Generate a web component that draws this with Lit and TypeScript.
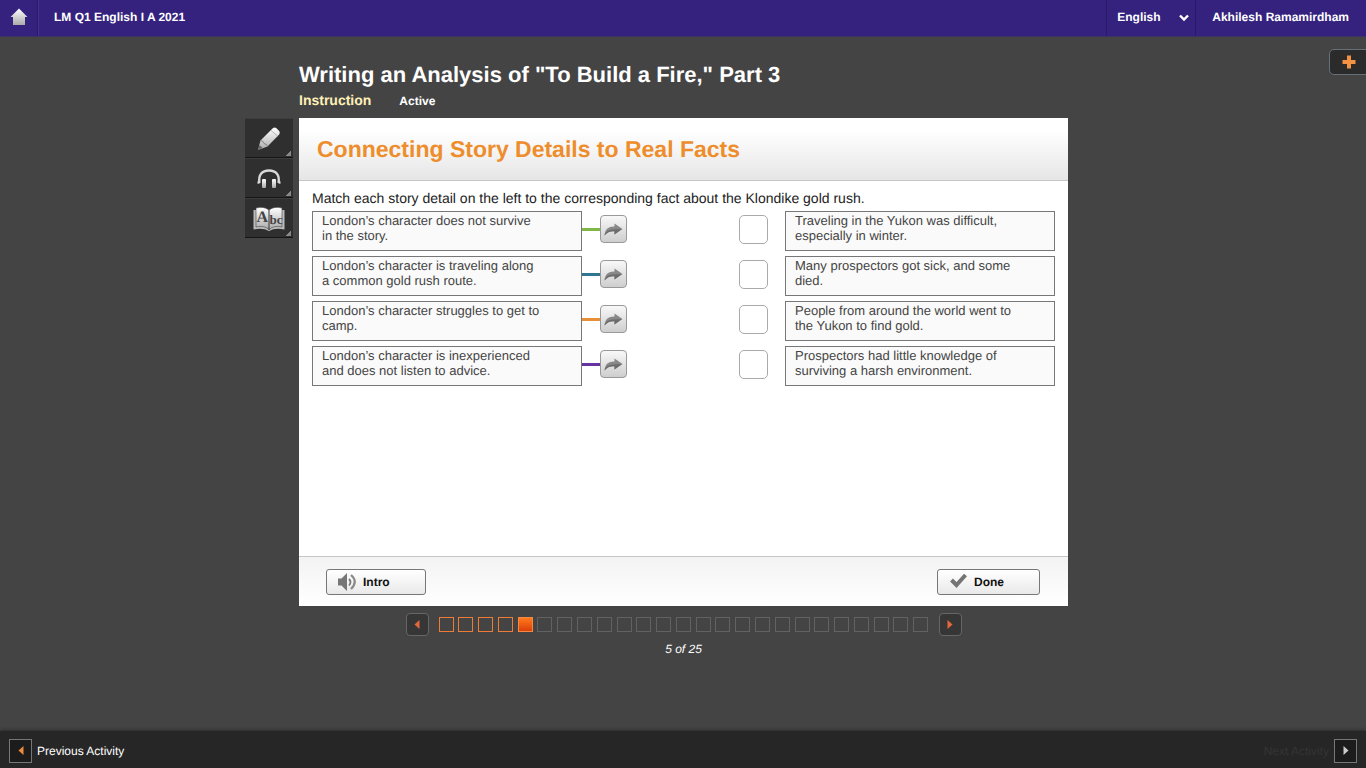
import { LitElement, html, css, svg } from "lit";
import { customElement } from "lit/decorators.js";
import { classMap } from "lit/directives/class-map.js";

interface Pair {
  detail: string;
  fact: string;
  tone: string;
}

const PAIRS: Pair[] = [
  {
    detail: "London’s character does not survive in the story.",
    fact: "Traveling in the Yukon was difficult, especially in winter.",
    tone: "green",
  },
  {
    detail: "London’s character is traveling along a common gold rush route.",
    fact: "Many prospectors got sick, and some died.",
    tone: "teal",
  },
  {
    detail: "London’s character struggles to get to camp.",
    fact: "People from around the world went to the Yukon to find gold.",
    tone: "orange",
  },
  {
    detail: "London’s character is inexperienced and does not listen to advice.",
    fact: "Prospectors had little knowledge of surviving a harsh environment.",
    tone: "purple",
  },
];

const metal = (id: string) => svg`
  <linearGradient id=${id} x1="0" y1="0" x2="0" y2="1">
    <stop offset="0" stop-color="#fff" />
    <stop offset="1" stop-color="#aaa" />
  </linearGradient>`;

const homeIcon = html`<svg width="18" height="18" viewBox="0 0 18 18" aria-hidden="true">
  <defs>${metal("home")}</defs>
  <path d="M9 0.5 17.5 9H15v8H3V9H0.5Z" fill="url(#home)" />
</svg>`;

const pencilIcon = html`<svg width="26" height="26" viewBox="0 0 26 26" aria-hidden="true">
  <defs>${metal("pen")}</defs>
  <path d="M16.500 2.500Q18.500 1 20.200 2L23.200 5Q24.500 6.500 23.200 8.500L11.500 20.500 2 24 4.500 14.500Z" fill="url(#pen)" />
  <path d="M15 4.500 21.500 10" stroke="#aaa" stroke-width="0.8" fill="none" />
  <path d="M3.400 19.200 6.600 21.600 1.800 24.200Z" fill="#666" />
  <path d="M4.500 14.500 6.500 15 8 17.500 10.500 18.500 11.500 20.500" fill="none" stroke="#777" stroke-width="0.8" />
</svg>`;

const headphonesIcon = html`<svg width="26" height="22" viewBox="0 0 26 22" aria-hidden="true">
  <defs>${metal("phones")}</defs>
  <path d="M1.500 14.500H3.500M3.500 15C2 7 6 2.500 13 2.500S24 7 22.500 15M22.500 14.500H24.500" fill="none" stroke="#d8d8d8" stroke-width="2.400" />
  <rect x="6" y="11" width="4" height="9" rx="1" fill="url(#phones)" />
  <rect x="16" y="11" width="4" height="9" rx="1" fill="url(#phones)" />
</svg>`;

const glossaryIcon = html`<svg class="book" width="32" height="26" viewBox="0 0 32 26" aria-hidden="true">
  <defs>${metal("book")}</defs>
  <path d="M0.500 4V23.500Q10 21.500 16 25 22 21.500 31.500 23.500V4Z" fill="#bbb" />
  <path d="M3 2Q11 0 16 4 21 0 29 2V21Q21 19 16 23.500 11 19 3 21Z" fill="url(#book)" stroke="#444" stroke-width="0.600" />
  <path d="M16 4V24" stroke="#333" />
  <text x="3.500" y="15.500" font-size="16">A</text>
  <text x="16.500" y="18" font-size="13">bc</text>
</svg>`;

const shareIcon = html`<svg width="19" height="13" viewBox="0 0 19 13" aria-hidden="true">
  <path d="M0.500 12.500C1 6 5 3.400 10.500 3.600V0.500L18.500 6 10.500 11.500V8.200C6 8 3 9.300 0.500 12.500Z" fill="#888" />
  <path d="M10.500 8.200C6 8 3 9.300 0.500 12.500 1.200 10 3.400 6.600 9 6.500L18 6 10.500 11.500Z" fill="#6c6c6c" />
</svg>`;

const speakerIcon = html`<svg width="20" height="20" viewBox="0 0 20 20" aria-hidden="true">
  <path d="M1 6.500H4.500L10 1V19L4.500 13.500H1Z" fill="#777" />
  <path d="M12 7Q15 10 12 13.500" fill="none" stroke="#777" stroke-width="1.800" />
  <path d="M14 3Q21.500 9.500 14 17" fill="none" stroke="#888" stroke-width="2.200" />
</svg>`;

const checkIcon = html`<svg width="18" height="18" viewBox="0 0 18 18" aria-hidden="true">
  <path d="M1.500 7 6.500 12 15.500 2" fill="none" stroke="#747474" stroke-width="4" />
</svg>`;

const plusIcon = html`<svg width="14" height="14" viewBox="0 0 14 14" aria-hidden="true">
  <path d="M5 0.500H9V5H13.500V9H9V13.500H5V9H0.500V5H5Z" fill="#f29242" />
</svg>`;

const chevronIcon = html`<svg class="chevron" width="10" height="8" viewBox="0 0 10 8" aria-hidden="true">
  <path d="M1 1.500 5 5.500 9 1.500" fill="none" stroke="#fff" stroke-width="2.400" />
</svg>`;

const leftIcon = html`<svg width="6" height="9" viewBox="0 0 6 9" aria-hidden="true">
  <path d="M5.500 0V9L0.500 4.500Z" fill="currentColor" />
</svg>`;

const rightIcon = html`<svg width="6" height="9" viewBox="0 0 6 9" aria-hidden="true">
  <path d="M0.500 0V9L5.500 4.500Z" fill="currentColor" />
</svg>`;

@customElement("app-root")
export class AppRoot extends LitElement {
  static properties = {
    current: { state: true },
  };

  declare current: number;
  private readonly total = 25;

  constructor() {
    super();
    this.current = 5;
  }

  static styles = css`
    :host {
      display: flex;
      flex-direction: column;
      min-height: 100vh;
      background: #444;
      color: #fff;
      font-family: "Liberation Sans", Arial, sans-serif;
      font-size: 12px;
      text-rendering: geometricPrecision;
    }
    * {
      box-sizing: border-box;
    }
    svg {
      display: block;
      flex: none;
    }
    h1,
    h2,
    p,
    ol,
    ul {
      margin: 0;
      padding: 0;
      list-style: none;
    }
    button,
    select {
      font: inherit;
      color: inherit;
      text-rendering: inherit;
      margin: 0;
      padding: 0;
      border: 0;
      background: none;
    }
    a {
      color: inherit;
      text-decoration: none;
    }

    .topbar {
      display: flex;
      height: 37px;
      background: #35227f;
      border-bottom: 1px solid #3b3462;
      font-weight: bold;
      line-height: 34px;
    }
    .home {
      display: flex;
      justify-content: center;
      padding-top: 8px;
      width: 38px;
      border-right: 1px solid #281a66;
    }
    .course {
      flex: 1;
      padding-left: 15px;
      border-left: 1px solid #443392;
    }
    .language {
      position: relative;
      width: 90px;
      border-left: 1px solid #281a66;
      border-right: 1px solid #281a66;
    }
    .language select {
      appearance: none;
      width: 100%;
      height: 34px;
      padding-left: 10px;
    }
    .chevron {
      position: absolute;
      right: 6px;
      top: 14px;
      pointer-events: none;
    }
    .user {
      padding: 0 17px 0 16px;
    }

    main {
      flex: 1;
      display: grid;
      grid-template-columns: 1fr minmax(0, 769px) 1fr;
      align-content: start;
      position: relative;
      padding-left: 1px;
    }
    .heading {
      grid-column: 2;
      height: 81px;
      padding-top: 24px;
    }
    h1 {
      font-size: 22px;
      line-height: 28px;
    }
    .status {
      display: flex;
      align-items: baseline;
      gap: 28px;
      font-weight: bold;
      line-height: 22px;
    }
    .kind {
      font-size: 14px;
      color: #fff0b8;
    }
    .add {
      position: absolute;
      right: -4px;
      top: 12px;
      display: grid;
      place-items: center;
      width: 41px;
      height: 26px;
      padding-right: 2px;
      background: #2b2b2b;
      border: 1px solid #667078;
      border-radius: 5px;
    }
    .clip {
      position: absolute;
      inset: 0;
      overflow: hidden;
      pointer-events: none;
    }
    .clip .add {
      pointer-events: auto;
    }

    .tools {
      grid-column: 1;
      justify-self: end;
      align-self: start;
      margin-right: 6px;
      width: 48px;
      background: #2f2f2f;
    }
    .tool {
      display: grid;
      place-items: center;
      width: 100%;
      height: 40px;
      border-top: 1px solid #3d3d3d;
      border-bottom: 1px solid #151515;
      background: linear-gradient(315deg, #888 4px, transparent 4px);
      background-position: -2px -1px;
      background-repeat: no-repeat;
    }
    .tool svg {
      margin-top: 2px;
    }
    .book text {
      font-family: "Liberation Serif", serif;
      font-weight: bold;
      fill: #444;
    }

    .panel {
      grid-column: 2;
      display: flex;
      flex-direction: column;
      min-height: 488px;
      background: #fff;
      color: #222;
    }
    .panel-head {
      padding: 16px 18px;
      background: linear-gradient(#fff 20%, #e6e6e6);
      border-bottom: 1px solid #c6c6c6;
    }
    h2 {
      font-size: 23px;
      line-height: 30px;
      color: #ee8d2c;
    }
    .exercise {
      flex: 1;
      padding: 7px 13px;
    }
    .prompt {
      font-size: 14px;
      line-height: 20px;
      margin-bottom: 3px;
    }
    .pairs {
      display: grid;
      gap: 5px;
    }
    .pair {
      display: flex;
      align-items: center;
    }
    .card {
      flex: 0 1 270px;
      height: 40px;
      padding: 1px 39px 0 9px;
      border: 1px solid #777;
      background: #fafafa;
      color: #444;
      font-size: 13px;
      line-height: 15px;
    }
    .wire {
      width: 18px;
      height: 3px;
      margin-bottom: 4px;
    }
    .green {
      background: #7fb848;
    }
    .teal {
      background: #2f7591;
    }
    .orange {
      background: #e88f3a;
    }
    .purple {
      background: #6534a0;
    }
    .link {
      display: grid;
      place-items: center;
      width: 27px;
      height: 28px;
      margin-bottom: 4px;
      border: 1px solid #999;
      border-radius: 4px;
      background: linear-gradient(#f8f8f8, #cecece);
    }
    .slot {
      width: 29px;
      height: 29px;
      margin: 0 17px 4px auto;
      border: 1px solid #aaa;
      border-radius: 5px;
      background: #fff;
    }
    .panel-foot {
      display: flex;
      justify-content: space-between;
      height: 50px;
      padding: 12px 28px 0 27px;
      border-top: 1px solid #c6c6c6;
      background: linear-gradient(#f3f3f3, #fff);
    }
    .action {
      display: flex;
      align-items: center;
      gap: 6px;
      min-width: 100px;
      height: 26px;
      padding: 0 10px;
      border: 1px solid #777;
      border-radius: 3px;
      background: linear-gradient(#fff, #e9e9e9);
      color: #111;
      font-weight: bold;
    }
    .done {
      min-width: 103px;
      padding: 0 12px;
    }

    .pager {
      grid-column: 2;
      display: flex;
      justify-content: center;
      align-items: center;
      gap: 10px;
      padding-top: 7px;
    }
    .step {
      display: grid;
      place-items: center;
      width: 23px;
      height: 23px;
      border: 1px solid #666;
      border-radius: 4px;
      background: #363636;
      color: #e2683c;
    }
    .frames {
      display: flex;
      justify-content: space-between;
      flex: 0 1 490px;
    }
    .frame {
      display: block;
      width: 15px;
      height: 15px;
      border: 1px solid #626262;
    }
    .visited {
      border-color: #ee7b36;
    }
    .active {
      border-color: #f58a45;
      background: linear-gradient(#ff7a1c, #dc3f08);
    }
    .count {
      grid-column: 2;
      padding-top: 5px;
      line-height: 16px;
      text-align: center;
      font-style: italic;
    }

    .bottombar {
      display: flex;
      justify-content: space-between;
      align-items: center;
      height: 37px;
      padding: 2px 9px 0;
      background: #262626;
      box-shadow: 0 -1px 3px #2a2a2a;
    }
    .activity {
      display: flex;
      align-items: center;
      gap: 5px;
    }
    .activity .box {
      display: grid;
      place-items: center;
      width: 23px;
      height: 24px;
      border: 1px solid #777;
      background: #1c1c1c;
      color: #ef8a3c;
    }
    .activity:disabled {
      color: #343434;
    }
    .activity:disabled .box {
      color: #ccc;
    }
  `;

  private go(to: number) {
    this.current = Math.min(this.total, Math.max(1, to));
  }

  render() {
    const frames = Array.from({ length: this.total }, (_, i) => i + 1);
    return html`
      <header class="topbar">
        <a class="home" href="#" aria-label="Home">${homeIcon}</a>
        <span class="course">LM Q1 English I A 2021</span>
        <div class="language">
          <select aria-label="Language"><option>English</option></select>
          ${chevronIcon}
        </div>
        <a class="user" href="#">Akhilesh Ramamirdham</a>
      </header>

      <main>
        <div class="clip"><button class="add" aria-label="Add">${plusIcon}</button></div>
        <div class="heading">
          <h1>Writing an Analysis of "To Build a Fire," Part 3</h1>
          <p class="status"><span class="kind">Instruction</span><span>Active</span></p>
        </div>

        <nav class="tools">
          <button class="tool" aria-label="Highlighter">${pencilIcon}</button>
          <button class="tool" aria-label="Read aloud">${headphonesIcon}</button>
          <button class="tool" aria-label="Glossary">${glossaryIcon}</button>
        </nav>

        <section class="panel">
          <div class="panel-head"><h2>Connecting Story Details to Real Facts</h2></div>
          <div class="exercise">
            <p class="prompt">
              Match each story detail on the left to the corresponding fact about the Klondike gold rush.
            </p>
            <ul class="pairs">
              ${PAIRS.map(
                (pair) => html`<li class="pair">
                  <div class="card">${pair.detail}</div>
                  <span class="wire ${pair.tone}"></span>
                  <button class="link" aria-label="Connect this detail">${shareIcon}</button>
                  <button class="slot" aria-label="Connect to this fact"></button>
                  <div class="card">${pair.fact}</div>
                </li>`,
              )}
            </ul>
          </div>
          <div class="panel-foot">
            <button class="action">${speakerIcon}Intro</button>
            <button class="action done">${checkIcon}Done</button>
          </div>
        </section>

        <nav class="pager" aria-label="Frames">
          <button class="step" aria-label="Previous frame" @click=${() => this.go(this.current - 1)}>${leftIcon}</button>
          <ol class="frames">
            ${frames.map(
              (n) => html`<li>
                <button
                  class=${classMap({ frame: true, visited: n < this.current, active: n === this.current })}
                  aria-label="Frame ${n}"
                  @click=${() => this.go(n)}
                ></button>
              </li>`,
            )}
          </ol>
          <button class="step" aria-label="Next frame" @click=${() => this.go(this.current + 1)}>${rightIcon}</button>
        </nav>
        <p class="count">${this.current} of ${this.total}</p>
      </main>

      <footer class="bottombar">
        <button class="activity"><span class="box">${leftIcon}</span>Previous Activity</button>
        <button class="activity" disabled>Next Activity<span class="box">${rightIcon}</span></button>
      </footer>
    `;
  }
}
